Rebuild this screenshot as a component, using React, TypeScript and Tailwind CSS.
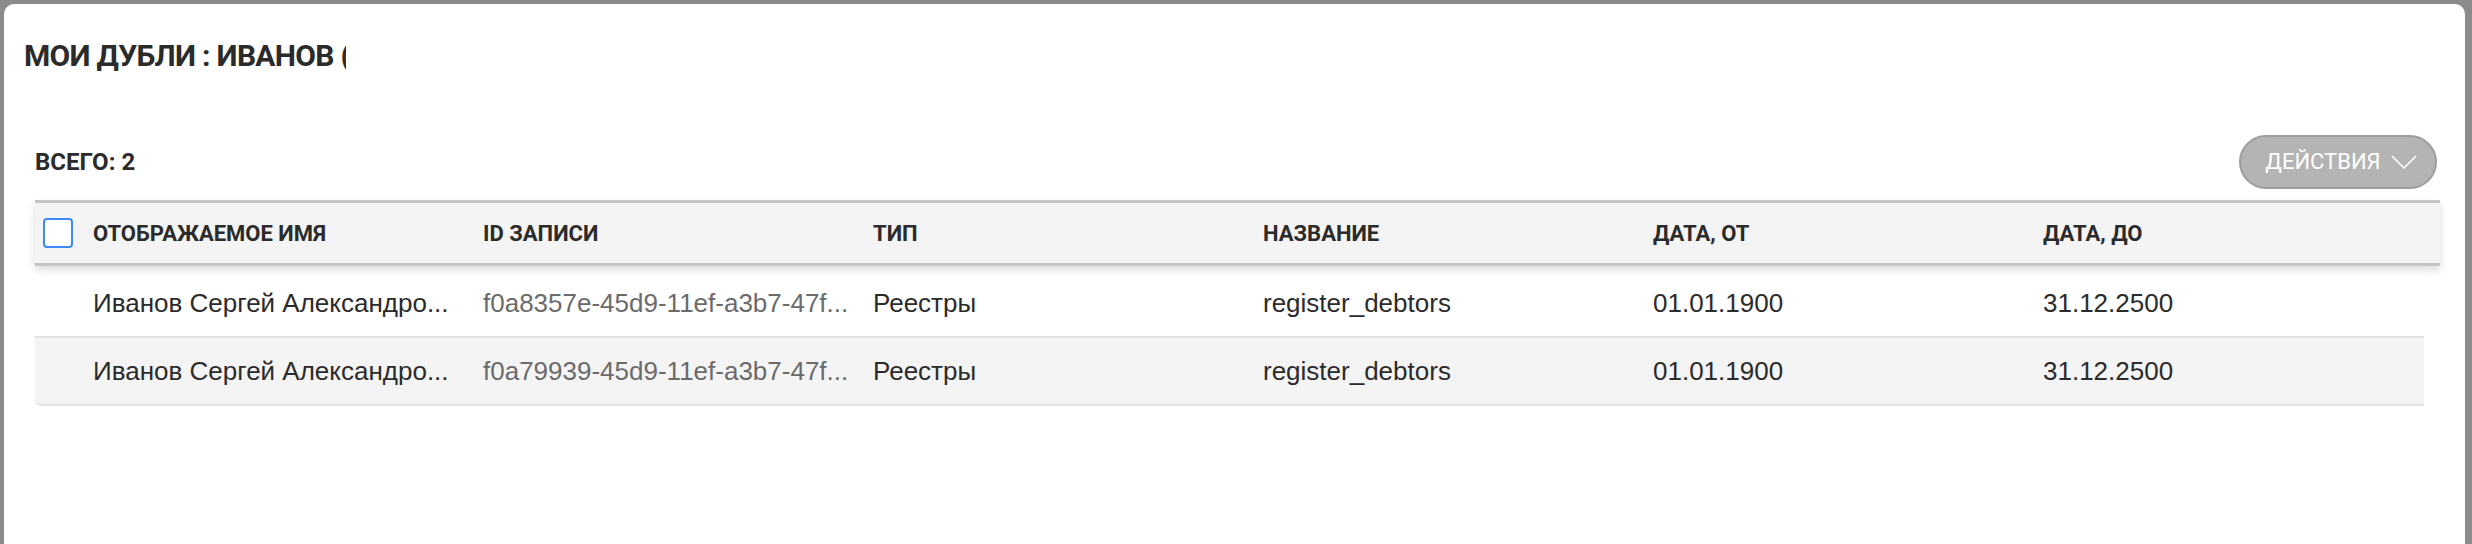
const rows = [
  {
    name: "Иванов Сергей Александро...",
    id: "f0a8357e-45d9-11ef-a3b7-47f...",
    type: "Реестры",
    title: "register_debtors",
    from: "01.01.1900",
    to: "31.12.2500",
  },
  {
    name: "Иванов Сергей Александро...",
    id: "f0a79939-45d9-11ef-a3b7-47f...",
    type: "Реестры",
    title: "register_debtors",
    from: "01.01.1900",
    to: "31.12.2500",
  },
];

const columns = ["ОТОБРАЖАЕМОЕ ИМЯ", "ID ЗАПИСИ", "ТИП", "НАЗВАНИЕ", "ДАТА, ОТ", "ДАТА, ДО"];

export default function App() {
  return (
    <div className="h-[544px] w-[2472px] overflow-hidden bg-[#8b8b8b] pl-[4px] pr-[7px] pt-[4px]">
      <div className="h-full rounded-t-[10px] bg-white font-['Roboto',sans-serif] text-[#2b2b2b]">
        <div className="pl-[20px] pt-[32px]">
          <div className="w-[322px] overflow-hidden whitespace-nowrap text-[30px] font-bold leading-[40px] tracking-[-0.7px]">
            МОИ ДУБЛИ : ИВАНОВ (СЕРГЕЙ)
          </div>
        </div>

        <div className="pl-[31px] pr-[25px] pt-[58px]">
          <div className="flex h-[55px] items-center justify-between">
            <span className="text-[24px] font-bold">ВСЕГО: 2</span>
            <button className="mr-[3px] flex h-[54px] w-[198px] items-center justify-center gap-[10px] rounded-full border-2 border-[#9d9d9d] bg-[#b4b4b4] pl-[6px] text-[22px] text-white">
              ДЕЙСТВИЯ
              <svg width="26" height="14" viewBox="0 0 26 14" fill="none" stroke="currentColor" strokeWidth="1.6">
                <polyline points="1,1 13,13 25,1" />
              </svg>
            </button>
          </div>

          <div className="mt-[11px]">
            <div className="relative z-10 grid h-[66px] grid-cols-[58px_repeat(5,390px)_1fr] items-center border-y-[3px] border-[#c4c4c4] bg-[#f4f4f4] text-[22px] font-bold shadow-[0_4px_8px_rgba(0,0,0,0.14)]">
              <div className="pl-[8px]">
                <div className="h-[30px] w-[30px] rounded-[4px] border-2 border-[#3d8af7] bg-white" />
              </div>
              {columns.map((c) => (
                <div key={c}>{c}</div>
              ))}
            </div>

            <div className="mr-[16px] pt-[4px] font-['Liberation_Sans',sans-serif] text-[26px]">
              {rows.map((r, i) => (
                <div
                  key={r.id}
                  className={
                    i % 2 === 0
                      ? "grid h-[68px] grid-cols-[58px_repeat(5,390px)_1fr] items-center border-b-2 border-[#e2e2e2] bg-white"
                      : "grid h-[68px] grid-cols-[58px_repeat(5,390px)_1fr] items-center rounded-bl-[6px] border-b-2 border-[#e2e2e2] bg-[#f4f4f4]"
                  }
                >
                  <div />
                  <div className="whitespace-nowrap">{r.name}</div>
                  <div className="whitespace-nowrap text-[#6b6b6b]">{r.id}</div>
                  <div>{r.type}</div>
                  <div>{r.title}</div>
                  <div>{r.from}</div>
                  <div>{r.to}</div>
                </div>
              ))}
            </div>
          </div>
        </div>
      </div>
    </div>
  );
}
